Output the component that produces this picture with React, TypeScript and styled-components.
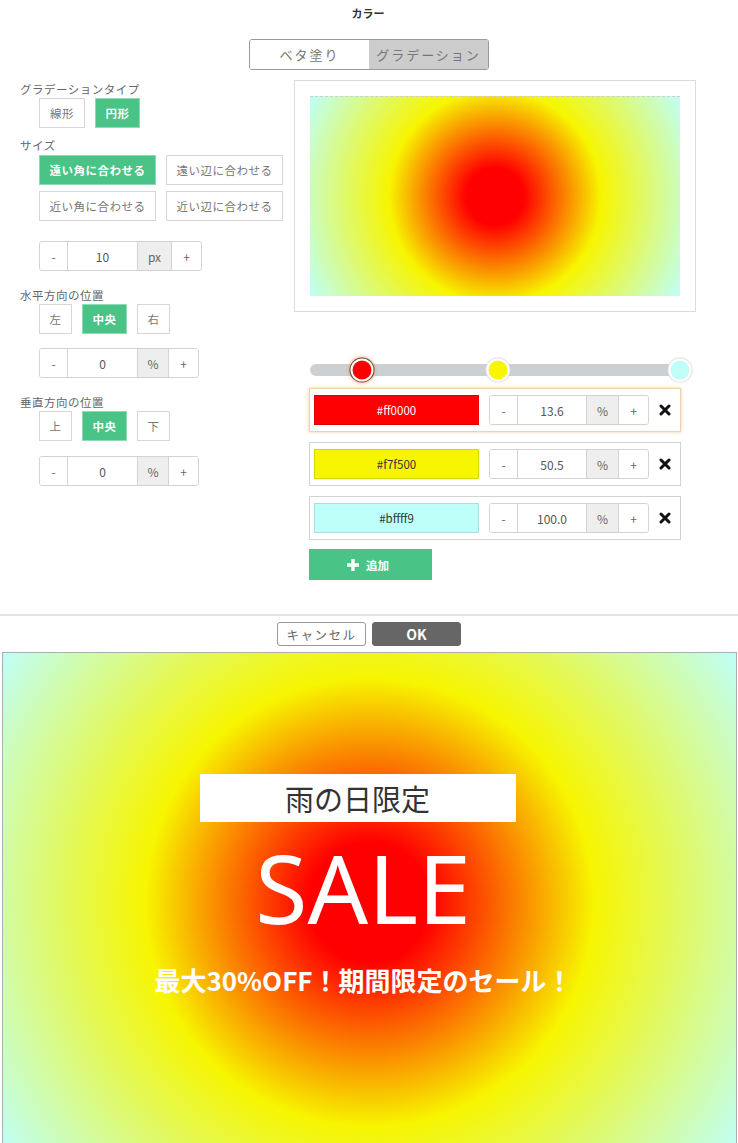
import React from "react";
import styled, { createGlobalStyle, css } from "styled-components";

const GlobalStyle = createGlobalStyle`
  * {
    box-sizing: border-box;
  }
  body {
    margin: 0;
    background: #fff;
    font-family: "Noto Sans CJK JP", "Noto Sans", sans-serif;
    color: #666;
  }
`;

const green = "#49c386";

type Stop = { color: string; pos: number; dark: boolean };

const stops: Stop[] = [
  { color: "#ff0000", pos: 13.6, dark: false },
  { color: "#f7f500", pos: 50.5, dark: true },
  { color: "#bffff9", pos: 100.0, dark: true },
];

const gradient = `radial-gradient(circle farthest-corner at 50% 50%, ${stops
  .map((s) => `${s.color} ${s.pos}%`)
  .join(", ")})`;

const Page = styled.div`
  width: 738px;
`;

const Header = styled.header`
  display: flex;
  flex-direction: column;
  align-items: center;
  padding-top: 6px;
`;

const Title = styled.h1`
  margin: 0;
  font-size: 11px;
  line-height: 14px;
  font-weight: 700;
  color: #333;
  padding-right: 2px;
`;

const Toggle = styled.div`
  display: flex;
  margin-top: 19px;
  width: 240px;
  height: 31px;
  border: 1px solid #999;
  border-radius: 3px;
  overflow: hidden;
`;

const ToggleItem = styled.div<{ $active?: boolean }>`
  flex: 1;
  display: flex;
  align-items: center;
  justify-content: center;
  font-size: 13px;
  letter-spacing: 2px;
  color: #777;
  background: ${({ $active }) => ($active ? "#cccccc" : "#fff")};
`;

const Main = styled.main`
  display: flex;
  margin-top: 10px;
  padding-left: 20px;
`;

const LeftPane = styled.section`
  width: 274px;
  display: flex;
  flex-direction: column;
`;

const RightPane = styled.section`
  width: 402px;
  display: flex;
  flex-direction: column;
`;

const Label = styled.div<{ $gap?: number }>`
  margin-top: ${({ $gap }) => $gap ?? 0}px;
  font-size: 11.5px;
  line-height: 16px;
  color: #666;
  letter-spacing: 0.5px;
`;

const OptionRow = styled.div`
  display: flex;
  gap: 10px;
  padding-left: 19px;
  margin-top: 1px;
`;

const OptionGrid = styled.div`
  display: grid;
  grid-template-columns: 117px 117px;
  gap: 6px 10px;
  padding-left: 19px;
  margin-top: 2px;
`;

const OptionButton = styled.button<{ $active?: boolean; $width: number }>`
  width: ${({ $width }) => $width}px;
  height: 30px;
  padding: 0;
  font-family: inherit;
  font-size: 11.5px;
  letter-spacing: 0.5px;
  border: 1px solid #d6d6d6;
  background: #fff;
  color: #777;
  ${({ $active }) =>
    $active &&
    css`
      background: ${green};
      border-color: #8fd9b3;
      color: #fff;
      font-weight: 700;
    `}
`;

const Stepper = styled.div<{ $gap?: number; $indent?: number }>`
  display: flex;
  height: 30px;
  margin-top: ${({ $gap }) => $gap ?? 0}px;
  margin-left: ${({ $indent }) => $indent ?? 0}px;
  border: 1px solid #d3d3d3;
  border-radius: 3px;
  overflow: hidden;
  align-self: flex-start;
  background: #fff;
`;

const StepCell = styled.div<{ $width: number; $unit?: boolean }>`
  width: ${({ $width }) => $width}px;
  display: flex;
  align-items: center;
  justify-content: center;
  font-size: 12px;
  color: #666;
  background: ${({ $unit }) => ($unit ? "#eeeeee" : "#fff")};
  & + & {
    border-left: 1px solid #d3d3d3;
  }
`;

const StepValue = styled(StepCell)`
  color: #555;
  font-size: 12px;
`;

const Preview = styled.div`
  height: 232px;
  border: 1px solid #dcdcdc;
  padding: 15px 14px 14px 15px;
`;

const PreviewCanvas = styled.div`
  width: 370px;
  height: 200px;
  border-top: 1px dashed #cfcfcf;
`;

const SliderTrack = styled.div`
  position: relative;
  margin-top: 52px;
  margin-left: 16px;
  width: 382px;
  height: 12px;
  border-radius: 6px;
  background: #cdd0d3;
`;

const Handle = styled.div<{ $selected?: boolean }>`
  position: absolute;
  top: 50%;
  width: 23px;
  height: 23px;
  border-radius: 50%;
  border: 2px solid #fff;
  transform: translate(-50%, -50%);
  box-shadow: ${({ $selected }) =>
    $selected
      ? "0 0 0 1px #5a4a40, 0 0 3px 2px rgba(240, 150, 80, 0.6)"
      : "0 0 0 1px #e4e4e4, 0 0 3px rgba(0,0,0,0.15)"};
`;

const StopList = styled.div`
  display: flex;
  flex-direction: column;
  gap: 10px;
  margin-top: 12px;
  margin-left: 15px;
`;

const StopRow = styled.div<{ $selected?: boolean }>`
  display: flex;
  align-items: center;
  width: 372px;
  height: 44px;
  padding-left: 4px;
  border: 1px solid ${({ $selected }) => ($selected ? "#f2cfae" : "#d2d2d2")};
  box-shadow: ${({ $selected }) =>
    $selected ? "0 0 3px rgba(240, 160, 90, 0.55)" : "none"};
`;

const Swatch = styled.div<{ $dark?: boolean }>`
  width: 165px;
  height: 30px;
  display: flex;
  align-items: center;
  justify-content: center;
  font-size: 11.5px;
  color: ${({ $dark }) => ($dark ? "#333" : "#fff")};
  border: 1px solid rgba(0, 0, 0, 0.12);
`;

const RowStepper = styled(Stepper)`
  margin-left: 10px;
  align-self: center;
`;

const RemoveButton = styled.div`
  display: flex;
  align-items: center;
  justify-content: center;
  width: 14px;
  margin-left: 9px;
`;

const AddButton = styled.button`
  display: flex;
  align-items: center;
  justify-content: center;
  gap: 6px;
  margin-top: 9px;
  margin-left: 15px;
  width: 123px;
  height: 31px;
  border: none;
  padding: 0 6px 0 0;
  background: ${green};
  color: #fff;
  font-family: inherit;
  font-size: 11.5px;
  font-weight: 700;
`;

const Footer = styled.footer`
  display: flex;
  justify-content: center;
  gap: 6px;
  margin-top: 34px;
  padding-top: 6px;
  border-top: 2px solid #e3e3e3;
`;

const FooterButton = styled.button<{ $primary?: boolean }>`
  width: 89px;
  height: 24px;
  padding: 0;
  border-radius: 3px;
  font-family: inherit;
  ${({ $primary }) =>
    $primary
      ? css`
          background: #666;
          border: 1px solid #666;
          color: #fff;
          font-size: 14px;
          font-weight: 700;
        `
      : css`
          background: #fff;
          border: 1px solid #999;
          color: #666;
          font-size: 12.5px;
          letter-spacing: 1.5px;
        `}
`;

const Banner = styled.div`
  margin: 6px 1px 0 2px;
  height: 500px;
  border: 1px solid #aeaeae;
  border-bottom: none;
  display: flex;
  flex-direction: column;
  align-items: center;
  padding-top: 121px;
  padding-right: 24px;
`;

const BannerTag = styled.div`
  width: 316px;
  height: 48px;
  background: #fff;
  display: flex;
  align-items: center;
  justify-content: center;
  font-size: 29px;
  color: #333;
`;

const BannerHeadline = styled.div`
  margin-top: 15px;
  padding-left: 11px;
  font-family: "Noto Sans", "Open Sans", sans-serif;
  font-size: 95px;
  line-height: 100px;
  color: #fff;
  font-weight: 400;
`;

const BannerSub = styled.div`
  margin-top: 28px;
  padding-left: 12px;
  font-size: 26px;
  line-height: 30px;
  font-weight: 700;
  color: #fff;
`;

const Cross = () => (
  <svg width="12" height="12" viewBox="0 0 12 12">
    <path d="M2 2 L10 10 M10 2 L2 10" stroke="#111" strokeWidth="3" strokeLinecap="round" />
  </svg>
);

const Plus = () => (
  <svg width="14" height="14" viewBox="0 0 14 14">
    <path d="M7 1 V13 M1 7 H13" stroke="#fff" strokeWidth="3.4" />
  </svg>
);

const NumberStepper = ({
  value,
  unit,
  unitWidth,
  gap,
}: {
  value: string;
  unit: string;
  unitWidth: number;
  gap: number;
}) => (
  <Stepper $gap={gap} $indent={19}>
    <StepCell $width={27}>-</StepCell>
    <StepValue $width={70}>{value}</StepValue>
    <StepCell $width={unitWidth} $unit>
      {unit}
    </StepCell>
    <StepCell $width={30}>+</StepCell>
  </Stepper>
);

export default function App() {
  return (
    <Page>
      <GlobalStyle />
      <Header>
        <Title>カラー</Title>
        <Toggle>
          <ToggleItem>ベタ塗り</ToggleItem>
          <ToggleItem $active>グラデーション</ToggleItem>
        </Toggle>
      </Header>

      <Main>
        <LeftPane>
          <Label $gap={1}>グラデーションタイプ</Label>
          <OptionRow>
            <OptionButton $width={46}>線形</OptionButton>
            <OptionButton $width={45} $active>
              円形
            </OptionButton>
          </OptionRow>

          <Label $gap={9}>サイズ</Label>
          <OptionGrid>
            <OptionButton $width={117} $active>
              遠い角に合わせる
            </OptionButton>
            <OptionButton $width={117}>遠い辺に合わせる</OptionButton>
            <OptionButton $width={117}>近い角に合わせる</OptionButton>
            <OptionButton $width={117}>近い辺に合わせる</OptionButton>
          </OptionGrid>
          <NumberStepper value="10" unit="px" unitWidth={34} gap={20} />

          <Label $gap={16}>水平方向の位置</Label>
          <OptionRow>
            <OptionButton $width={33}>左</OptionButton>
            <OptionButton $width={45} $active>
              中央
            </OptionButton>
            <OptionButton $width={33}>右</OptionButton>
          </OptionRow>
          <NumberStepper value="0" unit="%" unitWidth={31} gap={14} />

          <Label $gap={16}>垂直方向の位置</Label>
          <OptionRow>
            <OptionButton $width={33}>上</OptionButton>
            <OptionButton $width={45} $active>
              中央
            </OptionButton>
            <OptionButton $width={33}>下</OptionButton>
          </OptionRow>
          <NumberStepper value="0" unit="%" unitWidth={31} gap={15} />
        </LeftPane>

        <RightPane>
          <Preview>
            <PreviewCanvas style={{ background: gradient }} />
          </Preview>

          <SliderTrack>
            {stops.map((s, i) => (
              <Handle
                key={s.color}
                $selected={i === 0}
                style={{ left: 2 + s.pos * 3.68, background: s.color }}
              />
            ))}
          </SliderTrack>

          <StopList>
            {stops.map((s, i) => (
              <StopRow key={s.color} $selected={i === 0}>
                <Swatch $dark={s.dark} style={{ background: s.color }}>
                  {s.color}
                </Swatch>
                <RowStepper>
                  <StepCell $width={27}>-</StepCell>
                  <StepValue $width={69}>{s.pos.toFixed(1)}</StepValue>
                  <StepCell $width={32} $unit>
                    %
                  </StepCell>
                  <StepCell $width={30}>+</StepCell>
                </RowStepper>
                <RemoveButton>
                  <Cross />
                </RemoveButton>
              </StopRow>
            ))}
          </StopList>

          <AddButton>
            <Plus />
            追加
          </AddButton>
        </RightPane>
      </Main>

      <Footer>
        <FooterButton>キャンセル</FooterButton>
        <FooterButton $primary>OK</FooterButton>
      </Footer>

      <Banner style={{ background: gradient }}>
        <BannerTag>雨の日限定</BannerTag>
        <BannerHeadline>SALE</BannerHeadline>
        <BannerSub>最大30%OFF！期間限定のセール！</BannerSub>
      </Banner>
    </Page>
  );
}
